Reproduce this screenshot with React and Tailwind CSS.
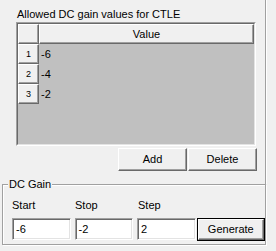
import React from "react";

const raised =
  "bg-[#f0f0f0] border border-t-white border-l-white border-r-[#696969] border-b-[#696969] shadow-[inset_-1px_-1px_0_#a0a0a0]";
const sunken =
  "bg-white border border-t-[#a0a0a0] border-l-[#a0a0a0] border-r-white border-b-white shadow-[inset_1px_1px_0_#696969,inset_-1px_-1px_0_#e3e3e3]";

const values = ["-6", "-4", "-2"];

export default function App() {
  return (
    <div className="w-[276px] h-[251px] overflow-hidden bg-[#f0f0f0] text-[11px] leading-[13px] text-black font-['Liberation_Sans',Arial,sans-serif]">
      {/* Allowed values panel */}
      <div className="w-[266px] h-[184px] border-r border-r-[#a0a0a0] shadow-[1px_0_0_#fff]">
        <div className="pl-[17px] pt-[8px]">Allowed DC gain values for CTLE</div>

        {/* Grid */}
        <div className="ml-[16px] mt-[1px] w-[240px] h-[124px] border border-t-[#a0a0a0] border-l-[#a0a0a0] border-r-white border-b-white">
          <div className="h-full flex flex-col bg-[#c0c0c0] border border-t-[#696969] border-l-[#696969] border-r-[#e3e3e3] border-b-[#e3e3e3]">
            <div className="flex h-[20px]">
              <div className={`w-[21px] ${raised}`} />
              <div className={`flex-1 flex items-center justify-center ${raised}`}>Value</div>
            </div>
            {values.map((v, i) => (
              <div key={i} className="flex h-[20px]">
                <div className={`w-[21px] flex items-center justify-center text-[9px] ${raised}`}>
                  {i + 1}
                </div>
                <div className="flex-1 flex items-center pl-[2px]">{v}</div>
              </div>
            ))}
          </div>
        </div>

        <div className="flex justify-end gap-[1px] pr-[8px] mt-[2px]">
          <button className={`w-[69px] h-[23px] ${raised}`}>Add</button>
          <button className={`w-[69px] h-[23px] ${raised}`}>Delete</button>
        </div>
      </div>

      {/* DC Gain group */}
      <div className="relative ml-[2px] w-[264px] h-[61px] border border-[#a0a0a0] shadow-[1px_1px_0_#fff,inset_1px_1px_0_#fff] pl-[9px] pt-[14px]">
        <span className="absolute left-[5px] -top-[7px] bg-[#f0f0f0] px-[1px]">DC Gain</span>
        <div className="flex gap-[4px] h-[13px]">
          <div className="w-[59px]">Start</div>
          <div className="w-[59px]">Stop</div>
          <div className="w-[59px]">Step</div>
        </div>
        <div className="flex items-start gap-[4px] mt-[6px]">
          <div className={`w-[59px] h-[22px] flex items-center pl-[3px] ${sunken}`}>-6</div>
          <div className={`w-[59px] h-[22px] flex items-center pl-[3px] ${sunken}`}>-2</div>
          <div className={`w-[59px] h-[22px] flex items-center pl-[3px] ${sunken}`}>2</div>
          <button className="-ml-[3px] w-[69px] h-[23px] border border-black">
            <div className={`w-full h-full flex items-center justify-center ${raised}`}>Generate</div>
          </button>
        </div>
      </div>
    </div>
  );
}
